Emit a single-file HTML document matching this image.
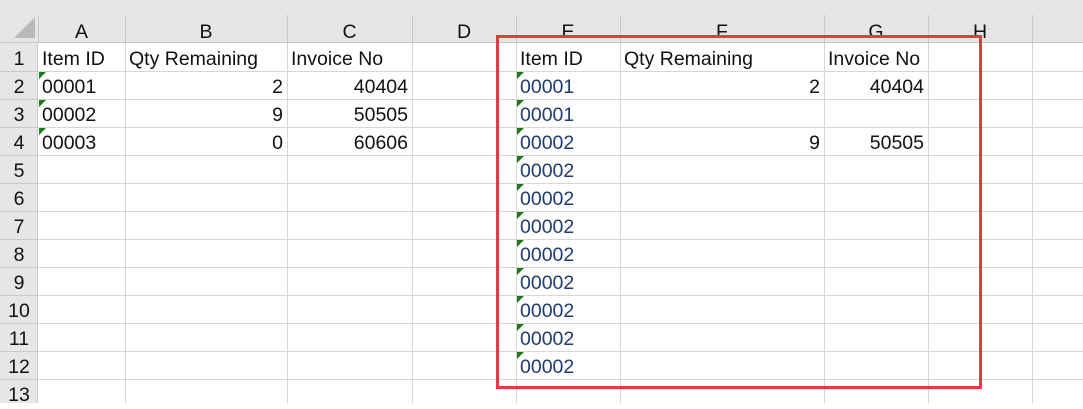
<!DOCTYPE html>
<html><head><style>
body{margin:0;width:1083px;height:403px;overflow:hidden;background:#fff;font-family:"Liberation Sans",sans-serif;position:relative}
.hd{position:absolute;left:0;top:0;width:1083px;height:43px;background:#e6e6e6;border-bottom:1px solid #c8c8c8;box-sizing:border-box}
.rh{position:absolute;left:0;top:43px;width:38px;height:360px;background:#e6e6e6;border-right:1px solid #c8c8c8;box-sizing:border-box}
.v{position:absolute;width:1px;background:#d6d6d6}
.hv{position:absolute;width:1px;background:#c8c8c8;top:15px;height:28px}
.h{position:absolute;height:1px;background:#d6d6d6;left:38px;width:1045px}
.rhl{position:absolute;height:1px;background:#c8c8c8;left:0;width:38px}
.t{position:absolute;font-size:19.5px;line-height:28px;white-space:nowrap;color:#111;margin-top:2px}
.c{text-align:center}
.r{text-align:right}
.b{color:#1f3a70}
.tri{position:absolute;width:0;height:0;border-top:7px solid #1a7a1a;border-right:7px solid transparent}
.box{position:absolute;left:496px;top:35px;width:486px;height:354px;border:3px solid #e8393e;box-sizing:border-box}
</style></head><body>
<div class="hd"></div>
<div class="rh"></div>
<svg style="position:absolute;left:14px;top:17px" width="22" height="22"><polygon points="21,0 21,21 0,21" fill="#b9b9b9"/></svg>
<div class="hv" style="left:38px"></div><div class="hv" style="left:125px"></div><div class="hv" style="left:287px"></div><div class="hv" style="left:412px"></div><div class="hv" style="left:516px"></div><div class="hv" style="left:620px"></div><div class="hv" style="left:824px"></div><div class="hv" style="left:928px"></div><div class="hv" style="left:1032px"></div>
<div class="v" style="left:125px;top:43px;height:360px"></div><div class="v" style="left:287px;top:43px;height:360px"></div><div class="v" style="left:412px;top:43px;height:360px"></div><div class="v" style="left:516px;top:43px;height:360px"></div><div class="v" style="left:620px;top:43px;height:360px"></div><div class="v" style="left:824px;top:43px;height:360px"></div><div class="v" style="left:928px;top:43px;height:360px"></div><div class="v" style="left:1032px;top:43px;height:360px"></div>
<div id="grid"></div>
<script>
var g='';for(var i=1;i<=12;i++){var y=43+28*i;g+='<div class="h" style="top:'+y+'px"></div><div class="rhl" style="top:'+y+'px"></div>';}
for(var i=1;i<=13;i++){g+='<div class="t c" style="left:0;width:38px;top:'+(43+28*(i-1))+'px">'+i+'</div>';}
var L=['A','B','C','D','E','F','G','H'],X=[38,125,287,412,516,620,824,928,1032];
for(var k=0;k<8;k++)g+='<div class="t c" style="left:'+X[k]+'px;width:'+(X[k+1]-X[k])+'px;top:16px">'+L[k]+'</div>';
function cell(x,w,row,txt,cls){g+='<div class="t '+(cls||'')+'" style="left:'+x+'px;width:'+w+'px;top:'+(43+28*(row-1))+'px">'+txt+'</div>';}
cell(42,80,1,'Item ID');cell(129,150,1,'Qty Remaining');cell(291,120,1,'Invoice No');
var a=['00001','00002','00003'],q=['2','9','0'],inv=['40404','50505','60606'];
for(var r=0;r<3;r++){cell(42,80,r+2,a[r]);g+='<div class="tri" style="left:39px;top:'+(44+28*(r+1))+'px"></div>';cell(125,158,r+2,q[r],'r');cell(287,121,r+2,inv[r],'r');}
cell(520,100,1,'Item ID');cell(624,180,1,'Qty Remaining');cell(828,100,1,'Invoice No');
var e=['00001','00001','00002','00002','00002','00002','00002','00002','00002','00002','00002'];
for(var r=0;r<11;r++){cell(520,100,r+2,e[r],'b');g+='<div class="tri" style="left:517px;top:'+(44+28*(r+1))+'px"></div>';}
cell(620,200,2,'2','r');cell(824,100,2,'40404','r');cell(620,200,4,'9','r');cell(824,100,4,'50505','r');
document.getElementById('grid').innerHTML=g;
</script>
<div class="box"></div>
</body></html>
